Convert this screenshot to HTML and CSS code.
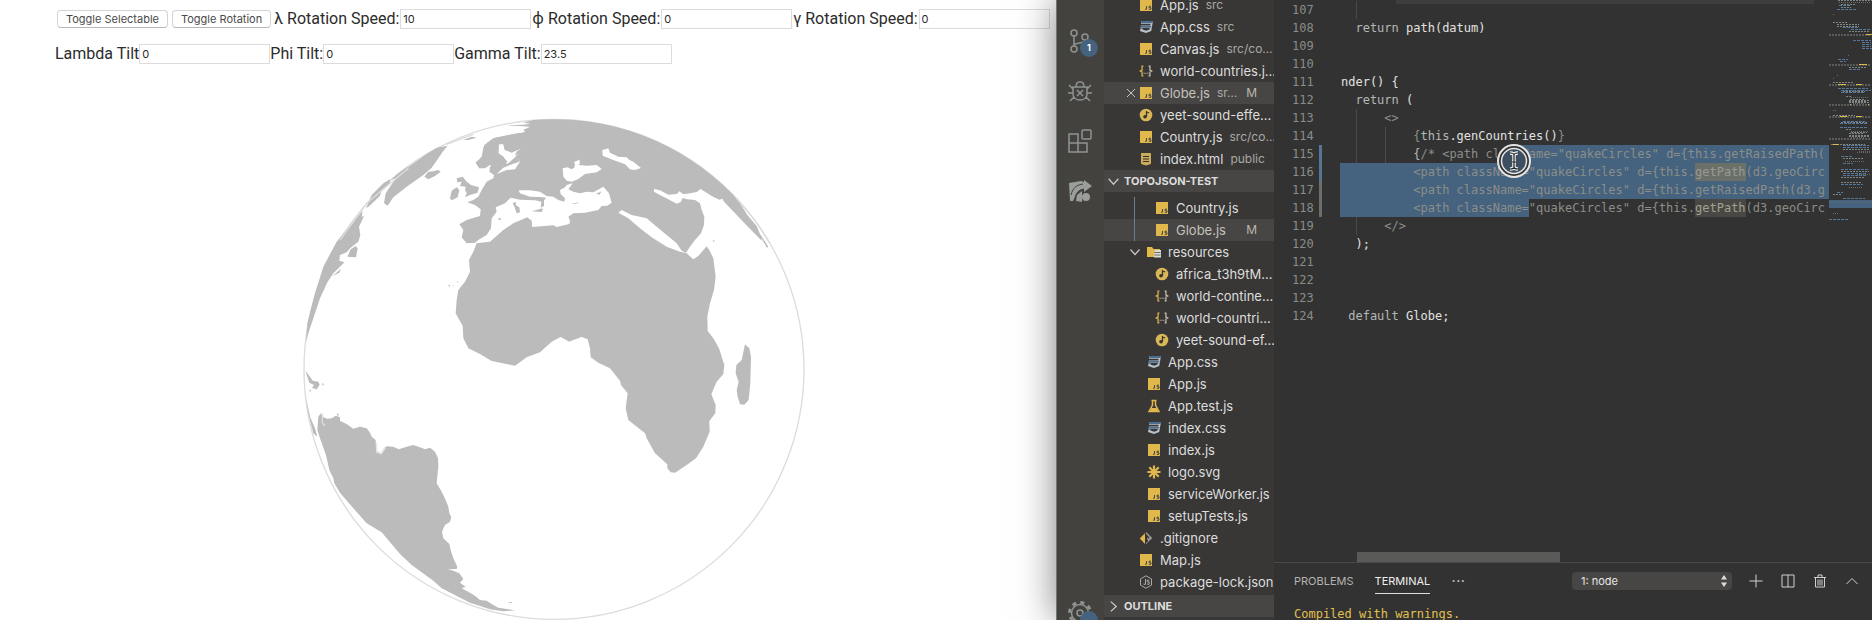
FILE: index.html
```html
<!DOCTYPE html>
<html lang="en">
<head>
<meta charset="utf-8">
<title>Globe</title>
<link rel="stylesheet" href="styles.css">
</head>
<body>
<svg class="defs" width="0" height="0" aria-hidden="true">
  <symbol id="js" viewBox="0 0 14 14"><path fill="#e0b84c" d="M1 1h12v12H1z"/><path d="M7.500 8v3.200H6M12 8.200h-2v1.500h2v1.600h-2.300" fill="none" stroke="#4b4a47"/></symbol>
  <symbol id="css" viewBox="0 0 14 14"><path fill="#b9c3cb" d="M2.500 1H14l-1.800 10-5.200 2-6-2 .5-2.500h2.200l-.2 1 3.700 1.200 3.300-1.200.3-1.800H1.500L2 5.500h9.300l.3-1.800H2z"/><path fill="#4a6e92" d="M2.500 1H14l-.4 2H2.100zM1.800 6h10.500l-.3 1.500H1.500z"/></symbol>
  <symbol id="json" viewBox="0 0 16 14"><path d="M5 1.500H3.500V6L1.500 7l2 1v4.500H5" fill="none" stroke="#e0b84c" stroke-width="1.400"/><path d="M11 1.500h1.500V6l2 1-2 1v4.500H11" fill="none" stroke="#c9c4b4" stroke-width="1.400"/><path d="M5.300 9.500h1.200M7.400 9.500h1.200M9.500 9.500h1.200" fill="none" stroke="#c9c4b4" stroke-width="1.200"/></symbol>
  <symbol id="audio" viewBox="0 0 14 14"><circle cx="7" cy="7" r="6.300" fill="#d9b656"/><path d="M7.500 3v5.500M7.500 3.500l2.500 1.500" stroke="#35332f" stroke-width="1.300" fill="none"/><circle cx="6" cy="8.800" r="1.800" fill="#35332f"/></symbol>
  <symbol id="html" viewBox="0 0 14 14"><path fill="#c9ab5b" d="M2 1h10v11l-5 1.500L2 12z"/><path d="M4 4.500h6M4 7h6M4 9.500h6" fill="none" stroke="#35332f" stroke-width="1.200"/></symbol>
  <symbol id="folder" viewBox="0 0 16 14"><path fill="#e0b84c" d="M1 2h5l1.500 2H14v8H1z"/><path fill="#ddd" d="M9 5h6v7.500H8z"/><path d="M8.500 7.500h6M8.500 10h6" stroke="#6a6965"/></symbol>
  <symbol id="test" viewBox="0 0 14 14"><path d="M4.500 1.500h5M5.500 2v4L2 12.500h10L8.500 6V2" fill="none" stroke="#e0b84c" stroke-width="1.500"/><path fill="#e0b84c" d="M4.500 9h5l1.500 3H3z"/></symbol>
  <symbol id="svgf" viewBox="0 0 14 14"><path d="M7 .5v13M.5 7h13M2.300 2.300l9.400 9.400M11.700 2.300l-9.400 9.400" stroke="#e0b84c" stroke-width="2.200"/></symbol>
  <symbol id="git" viewBox="0 0 14 14"><path fill="#e0b84c" d="M6 2v11L.8 7.500z"/><path fill="#96958f" d="M7 .8L13.300 7 7 13.300z"/><path d="M6 3l4 4M7.500 5v5" stroke="#35332f" stroke-width="1.300"/><circle cx="7.500" cy="10" r="1.400" fill="#35332f"/></symbol>
  <symbol id="node" viewBox="0 0 14 14"><path d="M7 .8l5.500 3.100v6.200L7 13.200l-5.500-3.100V3.900zM6.500 4v5.500L4.500 9M10.300 5.200H8.200v1.700h2v2.300H8" fill="none" stroke="#a9aaa5"/></symbol>
  <symbol id="down" viewBox="0 0 12 12"><path d="M1.500 3.500L6 8.500l4.500-5" fill="none" stroke="#c8c8c5" stroke-width="1.200"/></symbol>
  <symbol id="right" viewBox="0 0 12 12"><path d="M3.500 1.500L8.500 6l-5 4.500" fill="none" stroke="#c8c8c5" stroke-width="1.200"/></symbol>
</svg>
<div class="desktop">
  <main class="page">
    <form class="controls">
      <div class="control-row speeds">
        <button type="button">Toggle Selectable</button>
        <button type="button">Toggle Rotation</button>
        <label for="lr">λ Rotation Speed:</label><input id="lr" value="10">
        <label for="pr">ϕ Rotation Speed:</label><input id="pr" value="0">
        <label for="gr">γ Rotation Speed:</label><input id="gr" value="0">
      </div>
      <div class="control-row">
        <label for="lt">Lambda Tilt</label><input id="lt" value="0">
        <label for="pt">Phi Tilt:</label><input id="pt" value="0">
        <label for="gt">Gamma Tilt:</label><input id="gt" value="23.5">
      </div>
    </form>
    <div class="globe-area">
      <svg class="globe" viewBox="303 118 502 502" role="img" aria-label="Globe">
        <g transform="translate(290 100) scale(.33333)">
          <circle cx="792" cy="808" r="750" fill="#fff" stroke="#dcdcdc" stroke-width="4"/>
          <g fill="#bbb">
            <path d="M730 60A750 750 0 0 1 1330 285L1350 310 1372 345 1400 378 1410 402 1435 440 1431 443 1414 415 1414 422 1408 415 1390 397 1345 350 1303 306 1297 296 1288 299 1265 288 1232 267 1220 276 1200 280 1180 283 1168 274 1160 282 1135 284 1110 271 1092 267 1092 275 1110 285 1135 298 1160 311 1172 306 1178 294 1190 298 1215 300 1230 310 1235 330 1243 350 1242 375 1233 400 1215 420 1200 440 1188 458 1175 452 1160 430 1130 405 1100 380 1070 355 1025 345 995 330 985 338 1015 355 1050 385 1085 412 1130 440 1170 455 1190 460 1210 478 1225 468 1250 439 1258 450 1270 475 1277 530 1272 570 1260 610 1252 650 1253 693 1270 715 1287 745 1303 795 1300 822 1280 845 1264 883 1277 915 1276 940 1258 963 1259 995 1240 1040 1218 1075 1190 1095 1155 1118 1142 1117 1132 1105 1132 1093 1095 1060 1070 1015 1065 1000 1015 960 1007 925 1013 880 993 855 990 842 960 805 925 788 902 772 900 745 893 718 875 711 850 720 838 725 812 711 785 725 750 757 710 772 675 797 605 783 570 762 535 745 520 715 518 678 497 640 500 600 505 570 525 545 540 515 537 480 550 455 560 430 600 425 640 390 670 370 712 352 725 362 727 381 790 376 800 381 838 372 840 362 835 350 850 340 885 338 925 330 935 318 952 317 965 308 957 280 940 260 928 267 910 277 890 275 870 280 850 275 835 268 848 250 830 255 825 262 810 270 812 282 825 295 823 305 805 300 790 290 770 288 750 275 720 271 686 271 690 280 720 290 750 291 768 293 762 302 762 318 752 323 754 305 735 301 690 299 662 293 645 310 617 322 620 335 605 355 603 385 590 405 568 418 555 428 530 430 515 412 520 390 508 373 530 360 570 348 572 328 555 315 532 307 550 300 565 290 575 270 590 245 610 235 612 225 598 215 600 200 620 190 645 188 640 170 625 160 626 133 640 132 644 150 665 158 688 148 697 143 680 155 675 165 692 162 680 170 688 185 660 195 640 203 620 222 650 210 675 208 690 185 688 160 700 145 705 110 690 98 640 108 610 115 590 130 580 145 583 160 575 170 570 181 557 187 568 205 585 202 603 190 630 195 655 190 700 150 712 105 690 108 708 98 700 90 720 80 700 79 644 76 700 74 722 71 700 68Z"/>
            <path d="M580 145L583 135 612 114 645 108 695 98 730 90 730 200 690 185 676 168 692 162 680 155 697 143 665 156 644 148 640 132 626 133 625 160 640 170 652 185 640 200 618 208 600 195 585 205 568 205 557 188 575 170Z"/>
            <path d="M473 137L440 143 410 162 350 205 310 245 287 280 282 310 293 317 310 292 350 260 400 225 425 203 445 175 458 155ZM403 230L415 215 430 214 445 210 452 215 435 228 415 238ZM520 120L545 110 560 113 535 120ZM480 295L485 272 500 262 508 270 503 292 485 301ZM500 235L518 230 530 245 543 255 567 262 563 278 540 285 525 292 530 280 525 270 527 260 510 258 515 245 502 247ZM668 310L677 305 678 316 688 322 690 337 680 340 674 322ZM725 334L758 325 756 336ZM622 357L632 353 632 361ZM843 312L868 306 858 311ZM918 281L935 274 928 284ZM474 557L480 554 480 560ZM487 555l4 1-2 2zM500 545l4-1v4z"/>
            <path d="M300 238L280 250 245 285 228 325 238 318 270 288 275 270 300 248ZM355 198L325 220 302 240 330 230ZM218 332L180 375 140 425 100 500 75 580 52 670 48 728 55 700 75 640 90 595 113 545 130 520 150 500 163 487 148 482 150 465 170 457 180 445 205 425 211 405 207 380 222 348 215 350ZM172 470L182 448 197 438 203 445 198 472ZM128 528l25-22-5 12z"/>
            <path d="M46 812L60 830 68 842 85 845 89 855 80 868 66 864 72 855 58 848ZM96 850l6 2-4 6zM57 871l6-2-2 8zM48 890L60 950 75 985 82 1010 70 1000 56 945ZM85 950L92 940 98 950 110 956 125 955 137 947 150 952 150 962 170 972 190 986 210 980 230 985 240 998 245 1010 257 1020 258 1050 272 1060 282 1045 290 1039 310 1040 326 1048 350 1040 370 1035 390 1042 405 1048 420 1043 435 1055 444 1075 445 1100 440 1150 455 1175 466 1198 475 1220 478 1240 484 1252 480 1265 465 1275 456 1295 460 1315 478 1332 482 1350 490 1375 502 1400 500 1407 473 1408 490 1412 508 1420 520 1437 510 1448 527 1460 515 1465 540 1478 556 1488 570 1500 590 1502 605 1512 625 1523 675 1531 640 1534 600 1528 540 1508 500 1488 455 1465 430 1442 365 1395 330 1362 275 1297 230 1270 190 1225 150 1178 133 1150 130 1135 118 1110 108 1065 90 1015 82 990ZM140 940l6 2-2 8zM652 1508l12-3 2 4z"/>
            <path d="M1365 733L1378 745 1383 770 1381 850 1376 900 1363 914 1350 913 1343 890 1340 870 1346 845 1337 820 1339 795 1355 780ZM1267 423l6-3v6z"/>
          </g>
          <path fill="#fff" d="M818 205L832 202 845 208 853 203 855 190 851 187 868 179 870 188 866 195 890 197 920 195 935 207 920 217 885 222 865 237 845 245 830 242 820 230ZM937 150L955 145 960 158 985 170 1010 172 1018 180 1030 185 1053 204 1035 210 1020 208 1005 193 970 180 938 167Z"/>
          <path d="M355 205L230 310 150 420M550 103L470 133M97 940v28l8 10M1340 295L1400 368 1440 430" fill="none" stroke="#dcdcdc" stroke-width="4"/>
          <path d="M260 1030v26l14 5 12-18" fill="none" stroke="#e6e6e6" stroke-width="4"/>
        </g>
      </svg>
    </div>
  </main>

  <div class="window">
    <nav class="activity" aria-label="Activity bar">
      <div class="activity-group">
      <button type="button" aria-label="Source control"><svg width="26" height="26" viewBox="0 0 26 26"><g fill="none" stroke="#8d9492" stroke-width="1.500"><circle cx="7" cy="5" r="3"/><circle cx="18" cy="9" r="3"/><circle cx="7" cy="21" r="3"/><path d="M7 8v10M18 12c0 4-9 2-11 5"/></g></svg><span class="badge">1</span></button>
      <button type="button" aria-label="Debug"><svg width="26" height="26" viewBox="0 0 26 26"><g fill="none" stroke="#8d9492" stroke-width="1.500"><path d="M6 9h14v7c0 8-14 8-14 0zM9 9c0-7 8-7 8 0M6 11L2 7M20 11l4-4M6 15H1M20 15h5M7 19l-4 4M19 19l4 4M10 12l6 6M16 12l-6 6"/></g></svg></button>
      <button type="button" aria-label="Extensions"><svg width="26" height="26" viewBox="0 0 26 26"><g fill="none" stroke="#8d9492" stroke-width="1.500"><rect x="15" y="2" width="9" height="9" rx="1"/><path d="M2 6h9v18H2zM2 15h18v9h-9"/></g></svg></button>
      <button type="button" aria-label="Live share"><svg width="26" height="26" viewBox="0 0 26 26"><path fill="#9a9e9b" d="M2 5l12-2 3 1v-2l8 6-8 6v-3C9 11 9 19 6 23H3z"/><path d="M4 17C6 9 10 7 16 6M8 22c0-7 4-10 9-11" stroke="#45433f" fill="none"/><circle cx="19" cy="19" r="4" fill="#9a9e9b"/><path fill="#9a9e9b" d="M10 17l5-4v11l-6-1z"/></svg></button>
      </div>
      <button class="gear" type="button" aria-label="Manage"><svg width="26" height="26" viewBox="0 0 26 26"><g fill="none" stroke="#8d9492"><circle cx="13" cy="13" r="10.500" stroke-width="3" stroke-dasharray="4 4.250"/><circle cx="13" cy="13" r="8.500" stroke-width="1.500"/><circle cx="13" cy="13" r="3" stroke-width="1.500"/></g></svg><span class="badge"></span></button>
    </nav>

    <aside class="sidebar">
      <div class="editors">
        <div class="row"><svg><use href="#js"/></svg><span>App.js</span><small>src</small></div>
        <div class="row"><svg><use href="#css"/></svg><span>App.css</span><small>src</small></div>
        <div class="row"><svg><use href="#js"/></svg><span>Canvas.js</span><small>src/co…</small></div>
        <div class="row"><svg><use href="#json"/></svg><span>world-countries.j…</span></div>
        <div class="row active"><button class="close" type="button" aria-label="Close"><svg viewBox="0 0 12 12"><path d="M2 2l8 8M10 2l-8 8" stroke="#c4c4c0"/></svg></button><svg><use href="#js"/></svg><span>Globe.js</span><small>sr…</small><b>M</b></div>
        <div class="row"><svg><use href="#audio"/></svg><span>yeet-sound-effe…</span></div>
        <div class="row"><svg><use href="#js"/></svg><span>Country.js</span><small>src/co…</small></div>
        <div class="row"><svg><use href="#html"/></svg><span>index.html</span><small>public</small></div>
      </div>
      <h2><svg><use href="#down"/></svg>TOPOJSON-TEST</h2>
      <div class="tree">
        <div class="guided">
          <div class="row deep"><svg><use href="#js"/></svg><span>Country.js</span></div>
          <div class="row deep active"><svg><use href="#js"/></svg><span>Globe.js</span><b>M</b></div>
        </div>
        <div class="row open"><svg class="chev"><use href="#down"/></svg><svg class="wide"><use href="#folder"/></svg><span>resources</span></div>
        <div class="row deep"><svg><use href="#audio"/></svg><span>africa_t3h9tM…</span></div>
        <div class="row deep"><svg><use href="#json"/></svg><span>world-contine…</span></div>
        <div class="row deep"><svg><use href="#json"/></svg><span>world-countri…</span></div>
        <div class="row deep"><svg><use href="#audio"/></svg><span>yeet-sound-ef…</span></div>
        <div class="row mid"><svg><use href="#css"/></svg><span>App.css</span></div>
        <div class="row mid"><svg><use href="#js"/></svg><span>App.js</span></div>
        <div class="row mid"><svg><use href="#test"/></svg><span>App.test.js</span></div>
        <div class="row mid"><svg><use href="#css"/></svg><span>index.css</span></div>
        <div class="row mid"><svg><use href="#js"/></svg><span>index.js</span></div>
        <div class="row mid"><svg><use href="#svgf"/></svg><span>logo.svg</span></div>
        <div class="row mid"><svg><use href="#js"/></svg><span>serviceWorker.js</span></div>
        <div class="row mid"><svg><use href="#js"/></svg><span>setupTests.js</span></div>
        <div class="row"><svg><use href="#git"/></svg><span>.gitignore</span></div>
        <div class="row"><svg><use href="#js"/></svg><span>Map.js</span></div>
        <div class="row"><svg><use href="#node"/></svg><span>package-lock.json</span></div>
      </div>
      <h2><svg><use href="#right"/></svg>OUTLINE</h2>
    </aside>

    <section class="main">
      <div class="editor">
        <div class="topbar"></div>
        <div class="gutter">
          <div>107</div><div>108</div><div>109</div><div>110</div><div>111</div><div>112</div><div>113</div><div>114</div><div class="changed">115</div><div class="changed">116</div><div class="changed dim">117</div><div class="changed dim">118</div><div>119</div><div>120</div><div>121</div><div>122</div><div>123</div><div>124</div>
        </div>
        <div class="code"><div class="g1"></div><div><i>  return</i><span> path(datum)</span></div><div></div><div></div><div>nder() {</div><div><i>  return</i><span> (</span></div><div class="g1"><u>      &lt;&gt;</u></div><div class="g1 g2"><u>          {</u><i>this</i><span>.genCountries()</span><u>}</u></div><div class="g1 g2"><i>          {</i><u>/* &lt;path cla</u><u class="sel grow">ssName="quakeCircles" d={this.getRaisedPath(</u></div><div class="sel"><u>          &lt;path className="quakeCircles" d={this.<mark>getPath</mark>(d3.geoCirc</u></div><div class="sel"><u>          &lt;path className="quakeCircles" d={this.getRaisedPath(d3.g</u></div><div class="part"><u>          &lt;path className=</u><u>"quakeCircles" d={this.<mark class="low">getPath</mark>(d3.geoCirc</u></div><div class="g1"><u>      &lt;/&gt;</u></div><div>  );</div><div></div><div></div><div></div><div><i> default</i><span> Globe;</span></div></div>
        <svg class="minimap" width="43" height="222" viewBox="0 0 43 222" aria-hidden="true">
          <path fill="#45627f" d="M0 200h43v8H0z"/>
          <g fill="none" stroke-width="1">
            <path stroke="#7f8784" stroke-dasharray="2 1" d="M9 .5h34M12 4.500h14M12 7.500h10M4 22.500h14M8 24.500h22M20 31.500h20M0 35h42M0 65h42M20 67.500h18M4 82.500h20M0 85h42M14 91.500h22M17 96.500h5M21 99.500h14M20 102.500h20M0 105h42M4 115.500h22M0 117h42M12 122.500h26M17 129.500h5M20 133.500h14M20 136.500h20M0 139h42M2 144.500h34M14 149.500h26M14 158.500h20M12 171.500h28M12 177.500h24M12 182.500h20M4 194.500h8M8 26.500h22M20 100.500h20M20 101.500h18M22 132.500h16M20 135.500h20"/>
            <path stroke="#57779a" stroke-dasharray="3 1" d="M10 5.500h12M8 9.500h20M14 27.500h16M22 29.500h20M24 40.500h18M33 42.500h9M33 44.500h9M33 46.500h9M33 48.500h10M9 59.500h10M11 61.500h6M20 69.500h12M9 88.500h30M12 90.500h30M12 92.500h24M14 121.500h22M11 123.500h28M11 127.500h28M14 145.500h26M14 147.500h26M12 156.500h12M14 163.500h10M12 169.500h28M14 173.500h24M14 175.500h24M12 184.500h22M8 192.500h6M14 198.500h22M0 219.500h20"/>
            <path stroke="#6a6b64" stroke-dasharray="1 1" d="M10 2.500h32M4 14.500h2M19 55.500h2M8 75.500h2M4 78.500h2M22 97.500h18M24 103.500h12M4 110.500h3M22 131.500h18M22 137.500h14M30 151.500h12M28 152.500h14M16 161.500h20M28 174.500h14M20 187.500h14M0 202.500h43M4 213.500h6"/>
            <path stroke="#e0b84c" d="M37 34.500h6M30 64.500h8M9 84.500h8M27 84.500h6M11 116.500h7M27 116.500h6M39 104.500h1M21 104.500h1M4 144.500h6"/>
          </g>
        </svg>
        <svg class="pointer" width="36" height="36" viewBox="0 0 36 36" aria-hidden="true"><circle cx="18" cy="18" r="16" fill="#323232" stroke="#e4e4e4" stroke-width="2"/><circle cx="18" cy="18" r="12.500" fill="#45627f" fill-opacity=".6" stroke="#e4e4e4" stroke-width="1.500"/><path d="M14 10c3 0 4 1 4 2 0-1 1-2 4-2M14 26c3 0 4-1 4-2 0 1 1 2 4 2M18 12v12M16 19h4" fill="none" stroke="#eee" stroke-width="3.500"/><path d="M14 10c3 0 4 1 4 2 0-1 1-2 4-2M14 26c3 0 4-1 4-2 0 1 1 2 4 2M18 12v12M16 19h4" fill="none" stroke="#222" stroke-width="1.200"/></svg>
        <div class="scrollbar"></div>
      </div>
      <div class="panel">
        <div class="tabs">
          <button type="button">PROBLEMS</button>
          <button type="button" class="current">TERMINAL</button>
          <button type="button" class="more" aria-label="More">···</button>
          <span class="picker"><select aria-label="Terminal"><option>1: node</option></select><svg width="8" height="12" viewBox="0 0 8 12"><path fill="#ddd" d="M4 0l3 4.500H1zM4 12l3-4.500H1z"/></svg></span>
          <div class="actions">
            <button type="button" aria-label="New"><svg viewBox="0 0 16 16"><path d="M8 1.500v13M1.500 8h13"/></svg></button>
            <button type="button" aria-label="Split"><svg viewBox="0 0 16 16"><path d="M2 2h12v12H2zM8 2v12"/></svg></button>
            <button type="button" aria-label="Kill"><svg viewBox="0 0 16 16"><path d="M3.500 4.500h9V14h-9zM2 4.500h12M6 4V2h4v2M6 6.500v6M8 6.500v6M10 6.500v6"/></svg></button>
            <button type="button" aria-label="Maximize"><svg viewBox="0 0 16 16"><path d="M2.500 11L8 5.500l5.500 5.500"/></svg></button>
          </div>
        </div>
        <div class="output">Compiled with warnings.</div>
      </div>
    </section>
  </div>
</div>
</body>
</html>
```
FILE: styles.css
```css
* { box-sizing: border-box; }
body { margin: 0; background: #fff; font-family: Inter, "Noto Sans", sans-serif; }
button { font: inherit; color: inherit; background: none; border: 0; padding: 0; }
.defs { display: block; position: absolute; }
.desktop { display: grid; grid-template-columns: minmax(0, 1fr) 816px; height: 100vh; overflow: hidden; }

.page { min-width: 0; color: #2b2b2b; overflow: hidden; }
.controls { padding: 9px 0 0 55px; white-space: nowrap; }
.control-row { display: flex; align-items: center; height: 20px; margin-bottom: 15px; }
.control-row label { font: 16px/20px Roboto, "Noto Sans", sans-serif; }
.speeds label { padding: 0 1px; }
.control-row input { width: 131px; height: 20px; flex: none; padding: 1px 2px; border: 1px solid #dcdcdc; background: #fff; color: #2b2b2b; font: 11px Inter, sans-serif; border-radius: 0; }
.control-row button { height: 18px; margin: 0 2px; padding: 0 8px; border: 1px solid #d4d4d4; border-bottom-color: #b8b8b8; border-radius: 4px; background: #fff; color: #4a4a4a; font-size: 11px; line-height: 16px; }
.globe-area { display: flex; justify-content: center; padding: 39px 0 0 52px; }
.globe { width: 502px; flex: none; aspect-ratio: 1; display: block; }

.window { display: grid; grid-template-columns: 47px 170px minmax(0, 1fr); height: 100vh; background: #323232; border-left: 1px solid #6d7775; box-shadow: 0 0 36px rgba(0, 0, 0, .5); color: #ddd; position: relative; }
.activity { background: #44423f; display: flex; flex-direction: column; justify-content: space-between; overflow: hidden; padding-top: 16px; }
.activity-group { display: flex; flex-direction: column; }
.activity button { position: relative; height: 50px; width: 46px; display: grid; place-items: center; flex: none; }
.activity .gear { margin-bottom: -18px; }
.badge { position: absolute; right: 5px; top: 23px; width: 18px; height: 18px; border-radius: 50%; background: #45627f; color: #fff; font-size: 9px; line-height: 18px; font-weight: 700; }

.sidebar { background: #383736; min-width: 0; display: flex; flex-direction: column; overflow: hidden; }
.editors { height: 170px; flex: none; display: flex; flex-direction: column; justify-content: flex-end; overflow: hidden; }
.row { height: 22px; flex: none; display: flex; align-items: center; padding: 0 17px 0 35px; font-size: 13px; line-height: 22px; white-space: nowrap; position: relative; }
.row svg { width: 14px; height: 14px; flex: none; margin-right: 7px; }
.row span { flex: none; }
.row small { font-size: 12px; color: #a9a9a5; margin-left: 7px; }
.row b { font-size: 12px; font-weight: 400; color: #b9b6ad; margin-left: auto; }
.row.active { background: #484644; color: #c4c2bd; }
.row.mid { padding-left: 43px; }
.row.deep { padding-left: 51px; }
.row.open { padding-left: 25px; }
.row .chev { width: 12px; height: 12px; margin-right: 5px; }
.row .wide { width: 16px; margin-right: 6px; }
.row .close { width: 12px; height: 12px; margin: 0 2px 0 -14px; display: flex; }
.row .close svg { width: 12px; height: 12px; margin: 0; }
.sidebar h2 { height: 22px; flex: none; margin: 0; padding-left: 3px; display: flex; align-items: center; gap: 4px; background: #484644; font-size: 11px; font-weight: 700; }
.sidebar h2 svg { width: 13px; height: 13px; }
.tree { height: 403px; flex: none; display: flex; flex-direction: column; justify-content: flex-end; padding-bottom: 2px; }
.guided { background: linear-gradient(90deg, transparent 30px, #6c7f90 30px, #6c7f90 31px, transparent 31px); }
.guided .active { background: linear-gradient(90deg, #484644 30px, #6c7f90 30px, #6c7f90 31px, #484644 31px); }

.main { display: flex; flex-direction: column; min-width: 0; overflow: hidden; }
.editor { flex: 1; min-height: 0; display: flex; position: relative; padding-top: 1px; overflow: hidden; font: 12px/18px "DejaVu Sans Mono", monospace; }
.topbar { position: absolute; top: 0; left: 122px; right: 58px; height: 4px; background: #3e3e3d; }
.gutter { width: 48px; flex: none; color: #898c87; padding-left: 18px; }
.gutter .changed { background: linear-gradient(#567594, #567594) right / 3px 100% no-repeat; }
.gutter .changed.dim { background-image: linear-gradient(#6c6e6a, #6c6e6a); }
.code { flex: 1; min-width: 0; margin-left: 18px; color: #e2e2e0; }
.code div { display: flex; height: 18px; padding-left: 1px; white-space: pre; }
.code i { font-style: normal; color: #b4b8b6; }
.code u { text-decoration: none; color: #8b8e88; flex: none; }
.code .sel { background-color: #45627f; }
.code .part { background: linear-gradient(#45627f, #45627f) 0 0 / 189px 100% no-repeat; }
.code .grow { flex: 1 0 auto; }
.code mark { display: inline-block; height: 18px; background: #6b7069; color: #989b94; vertical-align: top; }
.code mark.low { background: #4a4845; color: #a3a090; }
.code .g1 { background: linear-gradient(#4a4a49, #4a4a49) 16px 0 / 1px 100% no-repeat; }
.code .g2 { background: linear-gradient(#4a4a49, #4a4a49) 16px 0 / 1px 100% no-repeat, linear-gradient(#4a4a49, #4a4a49) 45px 0 / 1px 100% no-repeat; }
.minimap { flex: none; display: block; margin-top: -1px; }
.pointer { position: absolute; left: 222px; top: 143px; }
.scrollbar { position: absolute; left: 83px; bottom: 0; width: 203px; height: 10px; background: #5a5b59; }

.panel { height: 58px; flex: none; border-top: 1px solid #4a4a49; overflow: hidden; }
.tabs { display: flex; align-items: center; height: 36px; padding: 0 12px 0 20px; font-size: 11px; color: #b4b4b0; }
.tabs > button { height: 26px; margin-right: 21px; border-bottom: 1px solid transparent; }
.tabs > .current { color: #eee; border-color: #ddd; }
.tabs > .more { font-size: 16px; }
.picker { position: relative; display: flex; margin-left: auto; }
.picker select { appearance: none; width: 160px; height: 18px; padding: 0 9px; border: 0; border-radius: 4px; background: #484644; color: #e6e6e6; font: 11px Inter, sans-serif; }
.picker svg { position: absolute; right: 4px; top: 3px; }
.actions { display: flex; gap: 16px; margin-left: 16px; }
.actions svg { width: 16px; height: 16px; display: block; fill: none; stroke: #d0d0ce; }
.output { padding-left: 20px; margin-top: 6px; font: 12px/18px "DejaVu Sans Mono", monospace; color: #e2c04f; }
```
